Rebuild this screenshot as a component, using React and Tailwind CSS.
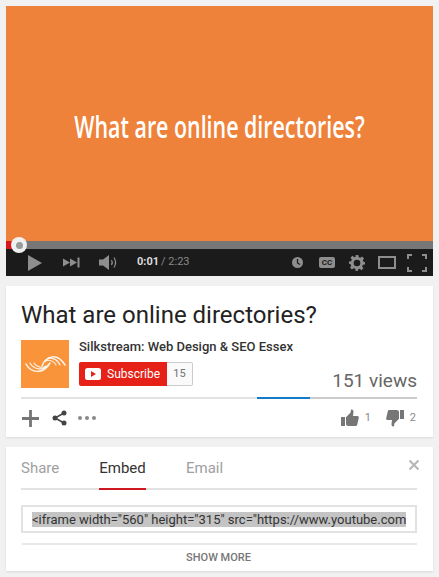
function Gray({ children, className = "", w = 24, h = 24, box = "0 0 24 24" }) {
  return (
    <svg width={w} height={h} viewBox={box} className={className} fill="currentColor">
      {children}
    </svg>
  );
}

function Thumb({ down = false }) {
  return (
    <svg width="18" height="18" viewBox="0 0 18 18" fill="#767676" className={down ? "rotate-180" : ""}>
      <path d="M0 8h4v9H0z" />
      <path d="M5 8.2 9.6 3.6 10 0.6c1.5-.5 2.7.6 2.5 2.3L12 7h4.4c1 0 1.6.9 1.4 1.8l-1.6 7c-.2.8-.8 1.2-1.5 1.2H7.5C6 17 5 16.2 5 15z" />
    </svg>
  );
}

export default function App() {
  return (
    <div className="h-[577px] w-[439px] overflow-hidden bg-[#f1f1f1] pt-[6px] pl-[6px] font-['Roboto',sans-serif]">
      <div className="w-[427px]">
        <div className="flex h-[235px] items-center justify-center bg-[#ef823a] pt-[6px]">
          <span className="inline-block origin-center scale-x-[0.69] font-['Open_Sans',sans-serif] text-[31px] font-semibold whitespace-nowrap text-white">
            What are online directories?
          </span>
        </div>
        <div className="relative flex h-[8px] bg-[#777777]">
          <div className="h-full w-[9px] bg-[#d9161e]" />
          <div className="absolute top-[-4px] left-[5px] flex h-[16px] w-[16px] items-center justify-center rounded-full bg-[#f0f0f0]">
            <div className="h-[7px] w-[7px] rounded-full bg-[#9a9a9a]" />
          </div>
        </div>
        <div className="flex h-[27px] items-center bg-[#1b1b1b] text-[#8e8e8e]">
          <Gray w={14} h={16} box="0 0 14 16" className="ml-[22px]">
            <path d="M0 0 14 8 0 16z" />
          </Gray>
          <Gray w={17} h={11} box="0 0 17 11" className="ml-[21px]">
            <path d="M0 1.500 7 5.500 0 9.500zM7 1.500 14 5.500 7 9.500zM14.500 .5h2v10h-2z" />
          </Gray>
          <svg width="19" height="15" viewBox="0 0 19 15" className="ml-[19px]" fill="none">
            <path d="M0 4.500h4L10 0v15l-6-4.500H0z" fill="#8e8e8e" />
            <path d="M12.500 5c.9 1.500.9 3.500 0 5M15 2.500c1.900 3 1.900 7 0 10" stroke="#8e8e8e" strokeWidth="1.200" />
          </svg>
          <span className="ml-[19px] text-[11px] font-bold text-[#dcdcdc]">0:01</span>
          <span className="ml-[2px] text-[11px] text-[#8a8a8a]">/ 2:23</span>
          <div className="ml-auto flex items-center">
            <svg width="11" height="11" viewBox="0 0 11 11">
              <circle cx="5.500" cy="5.500" r="5.500" fill="#8e8e8e" />
              <path d="M5.500 2v4l2.500 1.500" stroke="#1b1b1b" strokeWidth="1.300" fill="none" />
            </svg>
            <div className="ml-[16px] flex h-[11px] w-[16px] items-center justify-center rounded-[2px] bg-[#8e8e8e] text-[8px] leading-none font-bold text-[#1b1b1b]">
              CC
            </div>
            <svg width="16" height="16" viewBox="0 0 24 24" className="ml-[14px]" fill="#8e8e8e">
              <path fillRule="evenodd" d="M10 0h4l.6 3.200 2.400 1 2.700-1.900 2.800 2.800-1.800 2.700 1 2.400L24 10.800v3.400l-3.300.6-1 2.400 1.900 2.700-2.800 2.800-2.700-1.900-2.400 1L13 24h-3l-.6-3.200-2.400-1-2.700 1.900-2.800-2.800 1.900-2.700-1-2.400L0 13.200v-3.400l3.200-.6 1-2.400-1.900-2.700L5.100 1.300l2.700 1.900 2.400-1zM12 7a5 5 0 1 0 0 10 5 5 0 0 0 0-10z" />
            </svg>
            <div className="ml-[13px] h-[13px] w-[18px] border-2 border-[#8e8e8e]" />
            <svg width="20" height="18" viewBox="0 0 20 18" className="mr-[6px] ml-[11px]" fill="none" stroke="#8e8e8e" strokeWidth="2">
              <path d="M1 5V1h4M15 1h4v4M19 13v4h-4M5 17H1v-4" />
            </svg>
          </div>
        </div>

        <div className="mt-[10px] h-[151px] bg-white pt-[15px] pr-[16px] pl-[15px] shadow-[0_1px_2px_rgba(0,0,0,0.1)]">
          <h1 className="text-[24px] leading-[29px] font-normal text-[#222222]">What are online directories?</h1>
          <div className="mt-[10px] flex h-[57px]">
            <div className="flex h-[48px] w-[48px] items-center justify-center bg-[#f9943b]">
              <svg width="48" height="48" viewBox="0 0 48 48" fill="none" stroke="#ffffff" strokeLinecap="round">
                <path d="M5 24C10 33 22 35 29 23" strokeWidth="1.500" opacity="0.9" />
                <path d="M9 23C13 30 22 31 27 25" strokeWidth="1.300" opacity="0.85" />
                <path d="M13 23C16 28 22 28 25 26" strokeWidth="1.100" opacity="0.8" />
                <path d="M21 26C25 16 36 12 44 25" strokeWidth="1.500" opacity="0.9" />
                <path d="M39 25C36 18 28 16 24 21" strokeWidth="1.300" opacity="0.85" />
                <path d="M35 25C33 21 28 19 25 21" strokeWidth="1.100" opacity="0.8" />
              </svg>
            </div>
            <div className="-mt-[2px] ml-[10px] min-w-0 flex-1">
              <div className="text-[13px] leading-[17px] font-medium whitespace-nowrap text-[#333333]">
                Silkstream: Web Design &amp; SEO Essex
              </div>
              <div className="relative mt-[7px] flex h-[24px]">
                <div className="flex h-[24px] w-[88px] items-center rounded-l-[2px] bg-[#e62117] pl-[6px] text-white">
                  <svg width="16" height="12" viewBox="0 0 16 12">
                    <rect width="16" height="12" rx="2.500" fill="#ffffff" />
                    <path d="M6 3l5 3-5 3z" fill="#e62117" />
                  </svg>
                  <span className="ml-[6px] text-[12px] leading-none">Subscribe</span>
                </div>
                <div className="flex h-[24px] w-[26px] items-center justify-center rounded-r-[2px] border border-l-0 border-[#cccccc] bg-[#fafafa] text-[11px] text-[#737373]">
                  15
                </div>
                <div className="absolute top-[8px] right-0 text-[19px] leading-[22px] text-[#666666]">151 views</div>
              </div>
            </div>
          </div>
          <div className="relative h-[2px] bg-[#e2e2e2]">
            <div className="absolute top-0 right-0 flex h-[2px] w-[160px]">
              <div className="h-full w-[53px] bg-[#167ac6]" />
              <div className="h-full flex-1 bg-[#cccccc]" />
            </div>
          </div>
          <div className="mt-[10px] flex items-center">
            <svg width="17" height="17" viewBox="0 0 18 18" className="ml-px" fill="#767676">
              <path d="M7.500 0h3v7.500H18v3h-7.500V18h-3v-7.500H0v-3h7.500z" />
            </svg>
            <svg width="15" height="16" viewBox="0 0 15 16" className="ml-[13px]" fill="#444444" stroke="#444444">
              <circle cx="12" cy="3" r="2.500" stroke="none" />
              <circle cx="3" cy="8" r="2.500" stroke="none" />
              <circle cx="12" cy="13" r="2.500" stroke="none" />
              <path d="M12 3 3 8l9 5" fill="none" strokeWidth="1.500" />
            </svg>
            <div className="ml-[11px] flex gap-[3px]">
              <div className="h-[4px] w-[4px] rounded-full bg-[#8a8a8a]" />
              <div className="h-[4px] w-[4px] rounded-full bg-[#8a8a8a]" />
              <div className="h-[4px] w-[4px] rounded-full bg-[#8a8a8a]" />
            </div>
            <div className="mr-px ml-auto flex items-center text-[11px] text-[#8a8a8a]">
              <Thumb />
              <span className="ml-[6px]">1</span>
              <span className="ml-[15px]">
                <Thumb down />
              </span>
              <span className="ml-[6px]">2</span>
            </div>
          </div>
        </div>

        <div className="relative mt-[10px] h-[124px] bg-white pr-[16px] pl-[15px] shadow-[0_1px_2px_rgba(0,0,0,0.1)]">
          <div className="flex h-[43px] border-b-2 border-[#e2e2e2] text-[15px]">
            <div className="flex h-[43px] w-[78px] items-center pt-[3px] pb-[3px] text-[#a0a0a0]">Share</div>
            <div className="flex h-[43px] w-[47px] items-center justify-center border-b-[2px] border-[#cc181e] pt-[2px] font-normal text-[#333333]">
              Embed
            </div>
            <div className="ml-[40px] flex h-[43px] items-center pt-[3px] pb-[3px] text-[#a0a0a0]">Email</div>
          </div>
          <svg width="10" height="10" viewBox="0 0 10 10" className="absolute top-[13px] right-[14px]" stroke="#b8b8b8" strokeWidth="2.200">
            <path d="M.5.5l9 9M9.500.5l-9 9" />
          </svg>
          <div className="mt-[15px] flex h-[28px] items-center overflow-hidden border-2 border-[#e2e2e2] pl-[9px] text-[13px] whitespace-nowrap text-[#333333]">
            <span className="inline-block h-[15px] w-[374px] shrink-0 overflow-hidden bg-[#c4c4c4] leading-[15px]">
              {'<iframe width="560" height="315" src="https://www.youtube.com'}
            </span>
          </div>
          <div className="mt-[10px] ml-px flex h-[27px] items-center justify-center border-t-2 border-[#e8e8e8] pt-[1px] pr-[2px] text-[11px] font-medium text-[#767676]">
            SHOW MORE
          </div>
        </div>
      </div>
    </div>
  );
}
